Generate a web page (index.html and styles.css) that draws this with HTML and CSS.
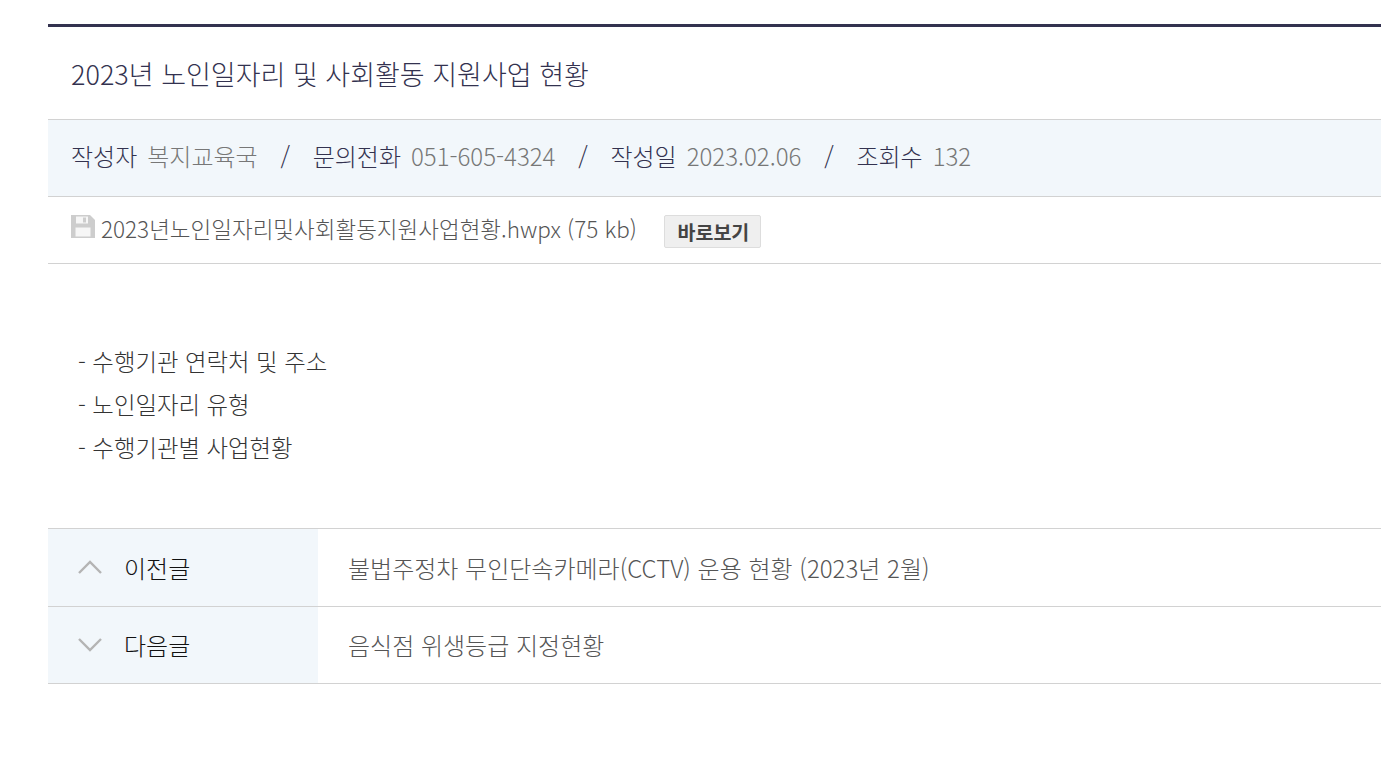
FILE: index.html
```html
<!DOCTYPE html>
<html lang="ko">
<head>
    <meta charset="UTF-8">
    <meta name="viewport" content="width=device-width, initial-scale=1.0">
    <title>2023년 노인일자리 및 사회활동 지원사업 현황</title>
    <link rel="stylesheet" href="styles.css">
</head>
<body>
    <div class="view">
        <h3 class="view-title">2023년 노인일자리 및 사회활동 지원사업 현황</h3>

        <div class="view-meta">
            <span class="meta-label">작성자</span><span class="meta-value">복지교육국</span>
            <span class="meta-sep">/</span>
            <span class="meta-label">문의전화</span><span class="meta-value">051-605-4324</span>
            <span class="meta-sep">/</span>
            <span class="meta-label">작성일</span><span class="meta-value">2023.02.06</span>
            <span class="meta-sep">/</span>
            <span class="meta-label">조회수</span><span class="meta-value">132</span>
        </div>

        <div class="view-file">
            <svg class="file-icon" width="24" height="23" viewBox="0 0 24 23">
                <path d="M0 0h19l5 5v18H0z" fill="#cdcdcd"/>
                <rect x="5" y="1.500" width="12" height="7" fill="#f6f6f6"/>
                <rect x="12" y="2.500" width="3" height="5" fill="#cdcdcd"/>
                <rect x="4.500" y="12.500" width="15" height="9" fill="#f6f6f6"/>
            </svg>
            <a href="#" class="file-name">2023년노인일자리및사회활동지원사업현황.hwpx (75 kb)</a>
            <a href="#" class="file-btn">바로보기</a>
        </div>

        <div class="view-body">
            <p>- 수행기관 연락처 및 주소</p>
            <p>- 노인일자리 유형</p>
            <p>- 수행기관별 사업현황</p>
        </div>

        <ul class="view-nav">
            <li class="nav-row">
                <div class="nav-head">
                    <svg class="nav-icon" width="24" height="14" viewBox="0 0 24 14"><path d="M1 13L12 2l11 11" fill="none" stroke="#b4b4b4" stroke-width="2.400"/></svg>
                    <span>이전글</span>
                </div>
                <a href="#" class="nav-link">불법주정차 무인단속카메라(CCTV) 운용 현황 (2023년 2월)</a>
            </li>
            <li class="nav-row">
                <div class="nav-head">
                    <svg class="nav-icon" width="24" height="14" viewBox="0 0 24 14"><path d="M1 1l11 11L23 1" fill="none" stroke="#b4b4b4" stroke-width="2.400"/></svg>
                    <span>다음글</span>
                </div>
                <a href="#" class="nav-link">음식점 위생등급 지정현황</a>
            </li>
        </ul>
    </div>
</body>
</html>
```

FILE: styles.css
```css
html, body {
    margin: 0;
    padding: 0;
    overflow: hidden;
}
body {
    font-family: "Noto Sans CJK KR", "Noto Sans", sans-serif;
    font-weight: 300;
    color: #222;
    background: #fff;
    padding: 24px 0 0 48px;
    height: 757px;
    box-sizing: border-box;
}
a {
    color: inherit;
    text-decoration: none;
}
.view {
    border-top: 3px solid #33324f;
}
.view-title {
    margin: 0;
    padding: 1px 23px 0;
    height: 91px;
    line-height: 91px;
    font-size: 27px;
    font-weight: 300;
    color: #33324f;
    border-bottom: 1px solid #d2d2d2;
}
.view-meta {
    display: flex;
    align-items: center;
    padding: 0 23px 6px;
    box-sizing: border-box;
    height: 77px;
    background: #f2f7fb;
    border-bottom: 1px solid #d2d2d2;
    font-size: 24px;
}
.meta-label {
    color: #33324f;
    margin-right: 10px;
}
.meta-value {
    color: #777;
}
.meta-sep {
    color: #33324f;
    margin: 0 22.75px;
}
.view-file {
    display: flex;
    align-items: center;
    padding: 0 23px 4px;
    box-sizing: border-box;
    height: 67px;
    border-bottom: 1px solid #d2d2d2;
    font-size: 22.5px;
    color: #555;
}
.file-icon {
    margin: -4px 6px 0 0;
}
.file-btn {
    margin: 6px 0 0 27px;
    width: 97px;
    height: 33px;
    line-height: 31px;
    box-sizing: border-box;
    padding-left: 2px;
    text-align: center;
    background: #efefef;
    border: 1px solid #ddd;
    border-radius: 2px;
    font-size: 19.5px;
    font-weight: 700;
    color: #444;
}
.view-body {
    padding: 76px 30px 59px;
    font-size: 23.4px;
    color: #333;
}
.view-body p {
    margin: 0;
    line-height: 43px;
}
.view-nav {
    list-style: none;
    margin: 0;
    padding: 0;
    border-top: 1px solid #d2d2d2;
}
.nav-row {
    display: flex;
    align-items: stretch;
    height: 77.5px;
    box-sizing: border-box;
    border-bottom: 1px solid #d2d2d2;
    font-size: 24px;
}
.nav-head {
    display: flex;
    align-items: center;
    gap: 22px;
    width: 270px;
    padding-left: 30px;
    box-sizing: border-box;
    background: #f2f7fb;
    color: #111;
}
.nav-link {
    display: flex;
    align-items: center;
    padding-left: 30px;
    color: #555;
}
```
